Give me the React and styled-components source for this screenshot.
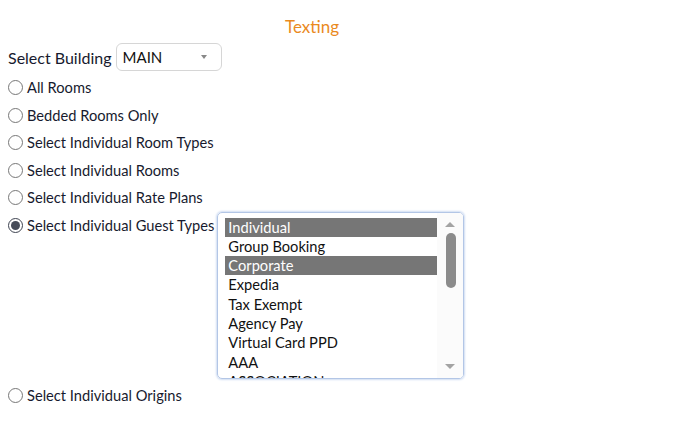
import React, { useState } from 'react'
import styled, { createGlobalStyle } from 'styled-components'

const scopeOptions = [
  { id: 'all', label: 'All Rooms' },
  { id: 'bedded', label: 'Bedded Rooms Only' },
  { id: 'roomTypes', label: 'Select Individual Room Types' },
  { id: 'rooms', label: 'Select Individual Rooms' },
  { id: 'ratePlans', label: 'Select Individual Rate Plans' },
  { id: 'guestTypes', label: 'Select Individual Guest Types', list: true },
  { id: 'origins', label: 'Select Individual Origins' },
]

const guestTypes = [
  { id: 1, label: 'Individual', selected: true },
  { id: 2, label: 'Group Booking' },
  { id: 3, label: 'Corporate', selected: true },
  { id: 4, label: 'Expedia' },
  { id: 5, label: 'Tax Exempt' },
  { id: 6, label: 'Agency Pay' },
  { id: 7, label: 'Virtual Card PPD' },
  { id: 8, label: 'AAA' },
  { id: 9, label: 'ASSOCIATION' },
]

const GlobalStyle = createGlobalStyle`
  body {
    margin: 8px;
    background: #fff;
    font-family: Lato, "Open Sans", sans-serif;
    color: #171a2e;
  }
`

const Page = styled.div`
  width: 608px;
`

const Title = styled.h2`
  margin: 0;
  padding-top: 8px;
  height: 27px;
  text-align: center;
  font-size: 17px;
  font-weight: 400;
  color: #ea8a1e;
`

const BuildingRow = styled.div`
  display: flex;
  align-items: center;
  gap: 4px;
  height: 28px;
  margin-bottom: 3px;
  font-size: 16px;
`

const Dropdown = styled.div`
  box-sizing: border-box;
  width: 106px;
  height: 28px;
  display: flex;
  align-items: center;
  justify-content: space-between;
  padding: 0 14px 0 6px;
  border: 1px solid #d6d6d6;
  border-radius: 6px;
  font-size: 15px;
  color: #111;
`

const Caret = styled.span`
  width: 0;
  height: 0;
  border-left: 3.5px solid transparent;
  border-right: 3.5px solid transparent;
  border-top: 4px solid #888;
`

const Row = styled.label`
  display: flex;
  align-items: ${p => (p.$list ? 'flex-start' : 'center')};
  height: ${p => (p.$list ? 'auto' : '27.5px')};
  margin-bottom: ${p => (p.$list ? '3px' : '0')};
  font-size: 14.67px;
  cursor: pointer;
`

const Choice = styled.span`
  display: flex;
  align-items: center;
  height: 27.5px;
`

const Radio = styled.span`
  box-sizing: border-box;
  width: 15px;
  height: 15px;
  margin-right: 4px;
  border-radius: 50%;
  border: 1px solid ${p => (p.$on ? '#3e4350' : '#777')};
  background: #fff;
  display: flex;
  align-items: center;
  justify-content: center;
  &::after {
    content: '';
    display: ${p => (p.$on ? 'block' : 'none')};
    width: 9px;
    height: 9px;
    border-radius: 50%;
    background: #474c59;
  }
`

const ListBox = styled.div`
  box-sizing: border-box;
  width: 247px;
  height: 167px;
  margin-left: 3px;
  border: 1px solid #b3c6e6;
  border-radius: 5px;
  box-shadow: 0 0 2px 1px #d0ddf2;
  display: flex;
  overflow: hidden;
`

const Options = styled.div`
  flex: 1;
  padding: 5px 0 0 7px;
  overflow: hidden;
`

const Option = styled.div`
  height: 19.3px;
  line-height: 19.3px;
  padding-left: 3px;
  font-size: 14.67px;
  white-space: nowrap;
  color: ${p => (p.$selected ? '#fff' : '#111')};
  background: ${p => (p.$selected ? '#767676' : 'transparent')};
`

const ScrollTrack = styled.div`
  width: 26px;
  background: #fbfbfb;
  display: flex;
  flex-direction: column;
  align-items: center;
  padding: 9px 0 9px 0;
  box-sizing: border-box;
`

const Arrow = styled.span`
  width: 0;
  height: 0;
  border-left: 5px solid transparent;
  border-right: 5px solid transparent;
  ${p => (p.$down ? 'border-top: 5px solid #a3a3a3;' : 'border-bottom: 5px solid #a3a3a3;')}
`

const Thumb = styled.div`
  width: 10px;
  height: 55px;
  margin-top: 6px;
  border-radius: 5px;
  background: #8b8b8b;
  margin-left: 1px;
`

const Spacer = styled.div`
  flex: 1;
`

const GuestList = () => (
  <ListBox>
    <Options>
      {guestTypes.map(item => (
        <Option key={item.id} $selected={item.selected}>{item.label}</Option>
      ))}
    </Options>
    <ScrollTrack>
      <Arrow />
      <Thumb />
      <Spacer />
      <Arrow $down />
    </ScrollTrack>
  </ListBox>
)

const App = () => {
  const [scope, setScope] = useState('guestTypes')

  return (
    <Page>
      <GlobalStyle />
      <Title>Texting</Title>
      <BuildingRow>
        Select Building
        <Dropdown>
          MAIN
          <Caret />
        </Dropdown>
      </BuildingRow>
      {scopeOptions.map(opt => (
        <Row key={opt.id} $list={opt.list} onClick={() => setScope(opt.id)}>
          <Choice>
            <Radio $on={scope === opt.id} />
            {opt.label}
          </Choice>
          {opt.list && <GuestList />}
        </Row>
      ))}
    </Page>
  )
}

export default App
